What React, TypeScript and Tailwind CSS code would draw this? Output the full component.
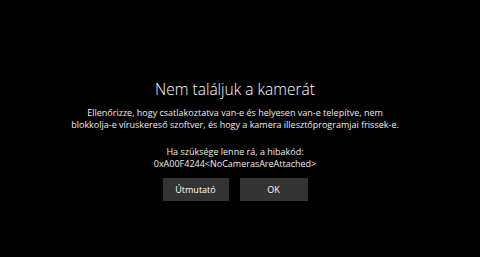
import React from 'react';

const App: React.FC = () => {
    return (
        <div className="w-[480px] h-[257px] bg-black text-white flex flex-col items-center pt-[79px] pr-[10px] font-['Open_Sans','Noto_Sans',sans-serif]">
            <h1 className="text-[15.5px] leading-[20px] font-light">Nem találjuk a kamerát</h1>
            <p className="text-[9px] leading-[12px] text-center mt-[8px] text-[#ececec]">
                Ellenőrizze, hogy csatlakoztatva van-e és helyesen van-e telepítve, nem
                <br />
                blokkolja-e víruskereső szoftver, és hogy a kamera illesztőprogramjai frissek-e.
            </p>
            <p className="text-[9px] leading-[12px] text-center mt-[15px] text-[#ececec]">
                Ha szüksége lenne rá, a hibakód:
                <br />
                0xA00F4244&lt;NoCamerasAreAttached&gt;
            </p>
            <div className="flex gap-[11px] mt-[8px]">
                <button className="w-[66px] h-[23px] bg-[#333333] text-[9px] text-white">Útmutató</button>
                <button className="w-[68px] h-[23px] bg-[#333333] text-[9px] text-white">OK</button>
            </div>
        </div>
    );
};

export default App;
